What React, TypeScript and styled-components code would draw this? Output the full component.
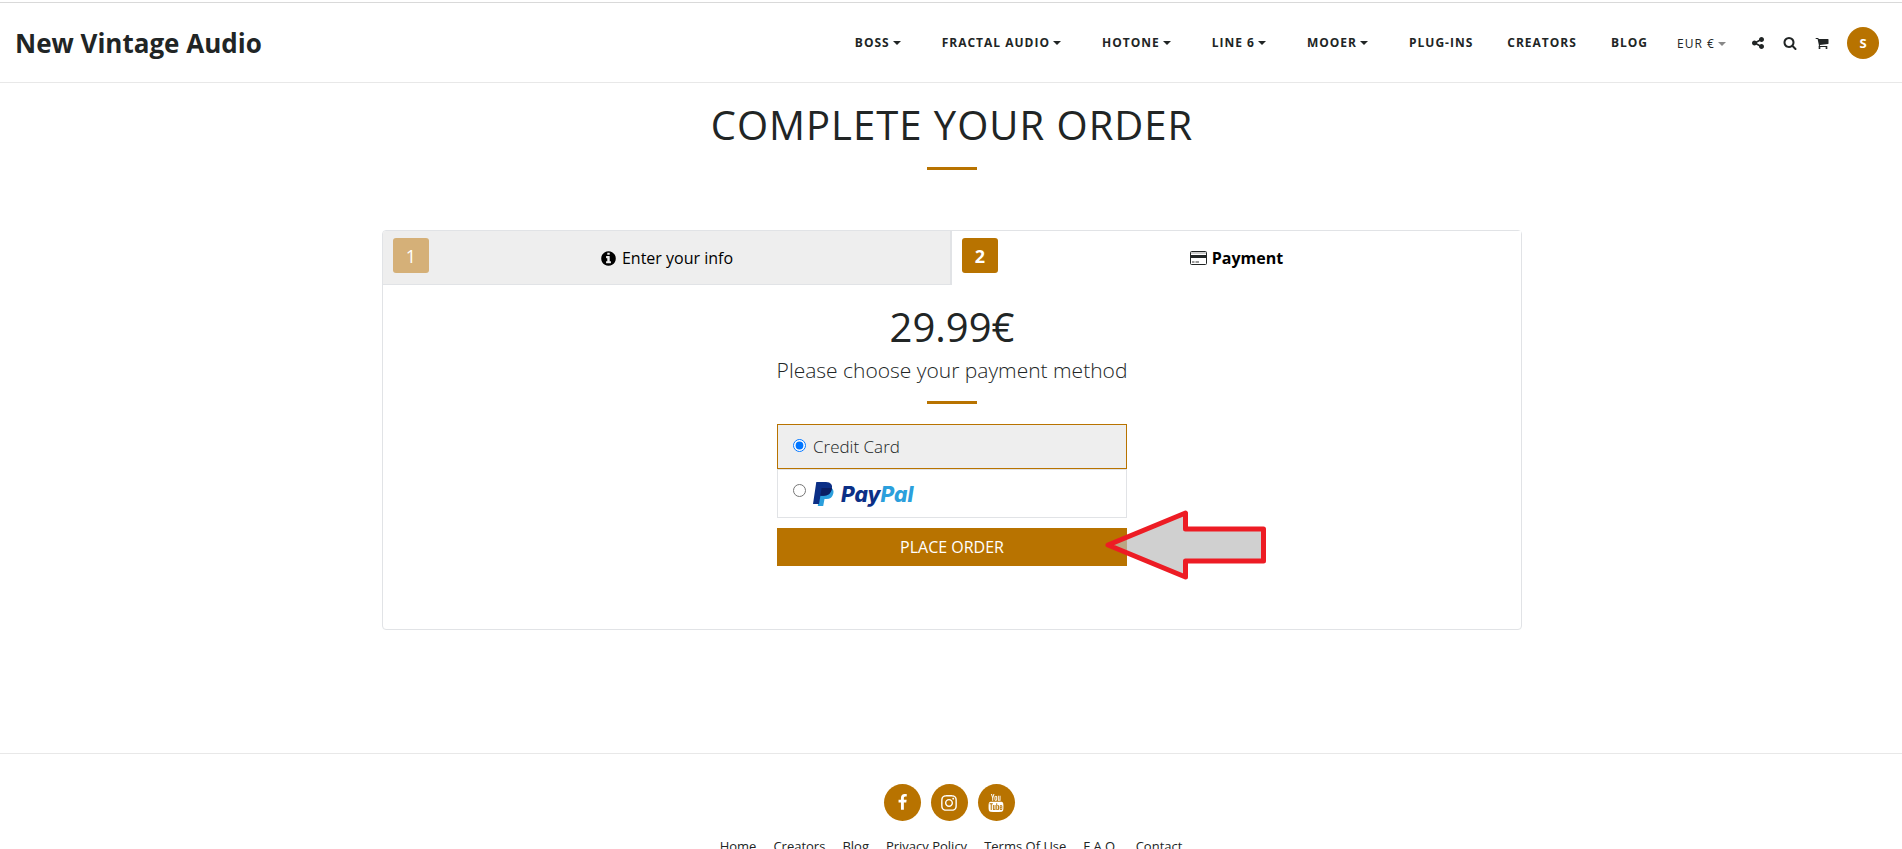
import React, { useState } from "react";
import styled, { createGlobalStyle } from "styled-components";
import { FaInstagram } from "react-icons/fa";
import { TfiYoutube } from "react-icons/tfi";

const gold = "#b87300";
const ink = "#212525";
const line = "#e1e3e6";

const GlobalStyle = createGlobalStyle`
  *, *::before, *::after { box-sizing: border-box; }
  body {
    margin: 0;
    background: #fff;
    color: ${ink};
    font-family: "Open Sans", "Noto Sans", sans-serif;
    font-size: 16px;
  }
  button, select, input { font: inherit; color: inherit; margin: 0; }
  a { color: inherit; text-decoration: none; }
`;

const Page = styled.div`
  padding-top: 2px;
`;

const Header = styled.header`
  display: flex;
  align-items: center;
  justify-content: space-between;
  height: 81px;
  padding: 0 23px 0 15px;
  border-top: 1px solid #d9d9d9;
  border-bottom: 1px solid #e8e8e8;
`;

const Brand = styled.a`
  font-size: 26px;
  line-height: 36px;
  font-weight: 700;
  white-space: nowrap;
`;

const Nav = styled.nav`
  display: flex;
  align-items: center;
`;

const NavLink = styled.a<{ $menu?: boolean }>`
  display: flex;
  align-items: center;
  gap: 3px;
  padding-right: ${(p) => (p.$menu ? 41 : 34)}px;
  font-size: 12px;
  line-height: 20px;
  font-weight: 700;
  letter-spacing: 1px;
  white-space: nowrap;
`;

const Caret = styled.i<{ $muted?: boolean }>`
  border: solid transparent;
  border-width: 4px 4px 0;
  border-top-color: ${(p) => (p.$muted ? "#888" : ink)};
`;

const Currency = styled.label`
  display: flex;
  align-items: center;
  gap: 3px;
  margin: 2px 25px 0 -5px;
`;

const CurrencySelect = styled.select`
  appearance: none;
  padding: 0;
  border: 0;
  background: none;
  font-size: 12px;
  line-height: 20px;
  letter-spacing: 1px;
`;

const Tools = styled.div`
  display: flex;
  align-items: center;
  gap: 18px;
`;

const IconButton = styled.button`
  display: flex;
  padding: 0;
  border: 0;
  background: none;
  cursor: pointer;
`;

const Avatar = styled.button`
  width: 32px;
  height: 32px;
  padding: 0;
  border: 0;
  border-radius: 50%;
  background: ${gold};
  color: #fff;
  font-size: 13px;
  font-weight: 700;
`;

const Main = styled.main`
  display: flex;
  flex-direction: column;
  align-items: center;
  padding: 14px 15px 123px 17px;
`;

const Title = styled.h1`
  margin: 0 0 14px;
  font-size: 40px;
  line-height: 56px;
  font-weight: 400;
  letter-spacing: 1px;
`;

const Rule = styled.hr`
  width: 50px;
  height: 3px;
  margin: 0;
  border: 0;
  background: ${gold};
`;

const Card = styled.section`
  width: 100%;
  max-width: 1140px;
  margin-top: 60px;
  border: 1px solid ${line};
  border-radius: 4px;
`;

const Steps = styled.div`
  display: grid;
  grid-template-columns: 1fr 1fr;
`;

const Step = styled.button<{ $active?: boolean }>`
  display: flex;
  align-items: flex-start;
  height: 54px;
  padding: 7px 10px;
  border: 0 solid ${line};
  border-width: ${(p) => (p.$active ? "0" : "0 2px 1px 0")};
  border-radius: 3px 0 0 0;
  background: ${(p) => (p.$active ? "#fff" : "#eee")};
  color: #000;
  font-weight: ${(p) => (p.$active ? 700 : 400)};
`;

const StepNumber = styled.span<{ $active?: boolean }>`
  display: grid;
  place-items: center;
  width: 36px;
  height: 35px;
  border-radius: 3px;
  background: ${(p) => (p.$active ? gold : "#d5b078")};
  color: #fff;
  font-size: 18px;
`;

const StepLabel = styled.span`
  flex: 1;
  display: flex;
  align-items: center;
  justify-content: center;
  gap: 5px;
  height: 40px;
  padding-right: 36px;
`;

const Payment = styled.form`
  display: flex;
  flex-direction: column;
  align-items: center;
  padding: 14px 16px 63px;
`;

const Price = styled.p`
  margin: 0;
  font-size: 40px;
  line-height: 56px;
`;

const Prompt = styled.h2`
  margin: 0 0 16px;
  font-size: 21px;
  line-height: 30px;
  font-weight: 300;
`;

const Methods = styled.div`
  width: 100%;
  max-width: 350px;
  margin-top: 20px;
`;

const Method = styled.label<{ $checked: boolean }>`
  display: flex;
  align-items: flex-start;
  gap: 7px;
  padding: 10px 15px;
  border: 1px solid ${(p) => (p.$checked ? gold : line)};
  background: ${(p) => (p.$checked ? "#eee" : "#fff")};
  font-size: 17px;
  line-height: 23px;
  font-weight: 300;
  cursor: pointer;
`;

const Radio = styled.input`
  width: 13px;
  height: 13px;
  margin-top: 4px;
  accent-color: #0075ff;
`;

const OrderRow = styled.div`
  position: relative;
  margin-top: 10px;
`;

const PlaceOrder = styled.button`
  width: 100%;
  height: 38px;
  border: 0;
  background: ${gold};
  color: #fff;
  cursor: pointer;
`;

const Pointer = styled.svg`
  position: absolute;
  top: -18px;
  left: 328px;
  pointer-events: none;
`;

const Footer = styled.footer`
  display: flex;
  flex-direction: column;
  align-items: center;
  padding: 30px 16px 24px;
  border-top: 1px solid #e8e8e8;
`;

const Social = styled.div`
  display: flex;
  gap: 10px;
  padding-right: 4px;
`;

const SocialLink = styled.a`
  display: grid;
  place-items: center;
  width: 37px;
  height: 37px;
  border-radius: 50%;
  background: ${gold};
  color: #fff;
  font-size: 18px;
`;

const FooterLinks = styled.nav`
  display: flex;
  flex-wrap: wrap;
  gap: 17px;
  margin-top: 16px;
  font-size: 13px;
  line-height: 18px;
`;

const Glyph = ({ d, size }: { d: string; size: number }) => (
  <svg width={size} height={size} viewBox="0 0 1792 1792" fill="currentColor" aria-hidden="true">
    <path d={d} />
  </svg>
);

const shapes = {
  share:
    "M1344 1024q133 0 226.500 93.500t93.500 226.500-93.500 226.500-226.500 93.500-226.500-93.500-93.500-226.500q0-12 2-34l-360-180q-92 86-218 86-133 0-226.500-93.500t-93.500-226.500 93.500-226.500 226.500-93.500q126 0 218 86l360-180q-2-22-2-34 0-133 93.500-226.500t226.500-93.500 226.500 93.500 93.500 226.500-93.500 226.500-226.500 93.500q-126 0-218-86l-360 180q2 22 2 34t-2 34l360 180q92-86 218-86z",
  search:
    "M1216 832q0-185-131.500-316.500t-316.500-131.500-316.500 131.500-131.500 316.500 131.500 316.500 316.500 131.500 316.500-131.500 131.500-316.500zm512 832q0 52-38 90t-90 38q-54 0-90-38l-343-342q-179 124-399 124-143 0-273.500-55.500t-225-150-150-225-55.500-273.500 55.500-273.500 150-225 225-150 273.500-55.500 273.500 55.500 225 150 150 225 55.500 273.500q0 220-124 399l343 343q37 37 37 90z",
  cart:
    "M704 1536q0 52-38 90t-90 38-90-38-38-90 38-90 90-38 90 38 38 90zm896 0q0 52-38 90t-90 38-90-38-38-90 38-90 90-38 90 38 38 90zm128-1088v512q0 24-16.500 42.500t-40.500 21.500l-1044 122q13 60 13 70 0 16-24 64h920q26 0 45 19t19 45-19 45-45 19h-1024q-26 0-45-19t-19-45q0-11 8-31.500t16-36 21.500-40 15.500-29.500l-177-823h-204q-26 0-45-19t-19-45 19-45 45-19h256q16 0 28.500 6.500t19.500 15.500 13 24.500 8 26 5.500 29.500 4.500 26h1201q26 0 45 19t19 45z",
  info:
    "M1152 1376v-160q0-14-9-23t-23-9h-96v-512q0-14-9-23t-23-9h-320q-14 0-23 9t-9 23v160q0 14 9 23t23 9h96v320h-96q-14 0-23 9t-9 23v160q0 14 9 23t23 9h448q14 0 23-9t9-23zm-128-896v-160q0-14-9-23t-23-9h-192q-14 0-23 9t-9 23v160q0 14 9 23t23 9h192q14 0 23-9t9-23zm640 416q0 209-103 385.500t-279.500 279.500-385.500 103-385.500-103-279.500-279.500-103-385.500 103-385.500 279.500-279.500 385.500-103 385.500 103 279.500 279.500 103 385.500z",
  facebook:
    "M1343 12v264h-157q-86 0-116 36t-30 108v189h293l-39 296h-254v759h-306v-759h-255v-296h255v-218q0-186 104-288.500t277-102.500q147 0 228 12z",
};

const PayPalLogo = () => (
  <svg width="104" height="27" viewBox="0 0 104 27" role="img" aria-label="PayPal">
    <path d="M6.500 8H18.500Q21.200 10 20.300 13.500Q19 19 13.500 19H11.500L10.200 26H4.800Z" fill="#2b9fdc" />
    <path d="M3.300 2H13Q20.300 2.300 18.900 9Q17.400 15.700 10.500 15.700H7.400L6 24H0Z" fill="#0b2f86" />
    <path d="M8.600 8H19Q18 15.700 10.500 15.700H7.400Z" fill="#0a1f63" />
    <text x="28" y="22" fontFamily="Inter, sans-serif" fontSize="21" fontWeight="800" fontStyle="italic">
      <tspan fill="#0b2f86">Pay</tspan>
      <tspan fill="#2b9fdc">Pal</tspan>
    </text>
  </svg>
);

const CardIcon = () => (
  <svg width="17" height="14" viewBox="0 0 17 14" aria-hidden="true">
    <rect x="0.500" y="0.500" width="16" height="13" rx="1" fill="#fff" stroke={ink} />
    <path d="M1 1H16V3H1Z" fill="#ccc" />
    <path d="M1 4H16V7H1Z" fill={ink} />
    <path d="M2 10H4.500V12H2ZM5.500 10H9V12H5.500Z" fill="#999" />
  </svg>
);

const navItems = [
  { name: "BOSS", menu: true },
  { name: "FRACTAL AUDIO", menu: true },
  { name: "HOTONE", menu: true },
  { name: "LINE 6", menu: true },
  { name: "MOOER", menu: true },
  { name: "PLUG-INS" },
  { name: "CREATORS" },
  { name: "BLOG" },
];

const footerItems = ["Home", "Creators", "Blog", "Privacy Policy", "Terms Of Use", "F.A.Q.", "Contact"];

export default function App() {
  const [method, setMethod] = useState("card");
  return (
    <Page>
      <GlobalStyle />
      <Header>
        <Brand href="#">New Vintage Audio</Brand>
        <Nav aria-label="Main">
          {navItems.map((item) => (
            <NavLink key={item.name} href="#" $menu={item.menu}>
              {item.name}
              {item.menu && <Caret />}
            </NavLink>
          ))}
          <Currency>
            <CurrencySelect aria-label="Currency">
              <option>EUR €</option>
            </CurrencySelect>
            <Caret $muted />
          </Currency>
          <Tools>
            <IconButton aria-label="Share"><Glyph d={shapes.share} size={14} /></IconButton>
            <IconButton aria-label="Search"><Glyph d={shapes.search} size={14} /></IconButton>
            <IconButton aria-label="Cart"><Glyph d={shapes.cart} size={14} /></IconButton>
            <Avatar>S</Avatar>
          </Tools>
        </Nav>
      </Header>
      <Main>
        <Title>COMPLETE YOUR ORDER</Title>
        <Rule />
        <Card>
          <Steps>
            <Step type="button">
              <StepNumber>1</StepNumber>
              <StepLabel><Glyph d={shapes.info} size={17} />Enter your info</StepLabel>
            </Step>
            <Step type="button" $active>
              <StepNumber $active>2</StepNumber>
              <StepLabel><CardIcon />Payment</StepLabel>
            </Step>
          </Steps>
          <Payment onSubmit={(e) => e.preventDefault()}>
            <Price>29.99€</Price>
            <Prompt>Please choose your payment method</Prompt>
            <Rule />
            <Methods>
              <Method $checked={method === "card"}>
                <Radio type="radio" name="method" checked={method === "card"} onChange={() => setMethod("card")} />
                Credit Card
              </Method>
              <Method $checked={method === "paypal"}>
                <Radio type="radio" name="method" checked={method === "paypal"} onChange={() => setMethod("paypal")} />
                <PayPalLogo />
              </Method>
              <OrderRow>
                <PlaceOrder type="submit">PLACE ORDER</PlaceOrder>
                <Pointer width="162" height="70" viewBox="0 0 162 70" aria-hidden="true">
                  <path
                    d="M3 35L80.500 3V19H158.500V51H80.500V67Z"
                    fill="rgba(188, 188, 188, 0.7)"
                    stroke="#ed1c24"
                    strokeWidth="5"
                    strokeLinejoin="round"
                  />
                </Pointer>
              </OrderRow>
            </Methods>
          </Payment>
        </Card>
      </Main>
      <Footer>
        <Social>
          <SocialLink href="#" aria-label="Facebook"><Glyph d={shapes.facebook} size={17} /></SocialLink>
          <SocialLink href="#" aria-label="Instagram"><FaInstagram /></SocialLink>
          <SocialLink href="#" aria-label="YouTube"><TfiYoutube /></SocialLink>
        </Social>
        <FooterLinks aria-label="Footer">
          {footerItems.map((name) => (
            <a key={name} href="#">{name}</a>
          ))}
        </FooterLinks>
      </Footer>
    </Page>
  );
}
